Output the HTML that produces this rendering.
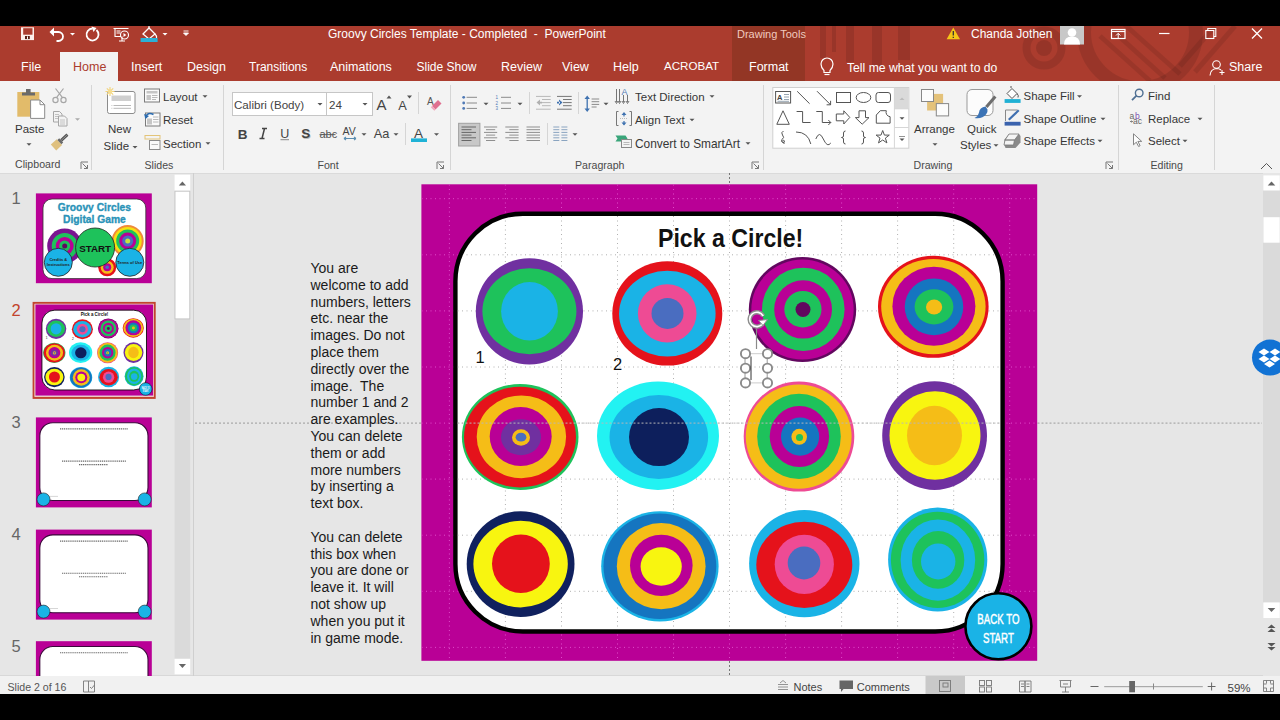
<!DOCTYPE html>
<html><head><meta charset="utf-8">
<style>
*{margin:0;padding:0;box-sizing:border-box}
html,body{width:1280px;height:720px;overflow:hidden;background:#000}
body{position:relative;font-family:"Liberation Sans",sans-serif;color:#444}
.a{position:absolute}
.t{position:absolute;white-space:nowrap;line-height:1}
svg{position:absolute;overflow:visible}
#top{left:0;top:26px;width:1280px;height:55px;background:#ab3c2e}
#ribbon{left:0;top:81px;width:1280px;height:93px;background:#f3f3f3;border-bottom:1px solid #dadada}
#work{left:0;top:174px;width:1280px;height:502px;background:#e6e6e6}
#status{left:0;top:675px;width:1280px;height:19px;background:#f1f1f1;border-top:1px solid #d8d8d8}
.tab{position:absolute;top:60px;font-size:12.5px;color:#fff;white-space:nowrap;line-height:14px}
.rl{position:absolute;font-size:12px;color:#444;white-space:nowrap;line-height:14px}
.gl{position:absolute;top:159px;font-size:11px;color:#555;white-space:nowrap;line-height:13px}
.sep{position:absolute;top:86px;width:1px;height:84px;background:#d6d6d6}
.dd{position:absolute;width:0;height:0;border-left:3px solid transparent;border-right:3px solid transparent;border-top:3px solid #555}
</style></head>
<body>
<!-- TITLE + TABS -->
<div id="top" class="a">
  <svg width="1280" height="55" style="left:0;top:0">
    <g fill="#000" fill-opacity="0.10">
      <rect x="820" y="0" width="6" height="32"/><rect x="832" y="0" width="4" height="26"/><rect x="846" y="0" width="8" height="36"/>
      <rect x="872" y="0" width="10" height="40"/><rect x="898" y="0" width="12" height="34"/>
    </g>
    <circle cx="1044" cy="22" r="17.5" fill="none" stroke="#000" stroke-opacity="0.10" stroke-width="8"/>
    <circle cx="1044" cy="22" r="8" fill="#000" fill-opacity="0.12"/>
    <circle cx="1140" cy="6" r="56" fill="none" stroke="#000" stroke-opacity="0.10" stroke-width="14"/>
    <g stroke="#000" stroke-opacity="0.09" stroke-width="5">
      <line x1="1100" y1="10" x2="1150" y2="55"/><line x1="1112" y1="4" x2="1165" y2="52"/>
      <line x1="1124" y1="-2" x2="1180" y2="48"/><line x1="1215" y1="0" x2="1180" y2="40"/>
      <line x1="1235" y1="0" x2="1195" y2="46"/>
    </g>
  </svg>
</div>
<!-- contextual tab -->
<div class="a" style="left:732px;top:26px;width:73px;height:55px;background:#933625"></div>
<div class="t" style="left:737px;top:28px;font-size:11px;color:#f2c9bf;line-height:12px">Drawing Tools</div>
<!-- Home tab -->
<div class="a" style="left:60px;top:52px;width:58px;height:29px;background:#f3f3f3"></div>
<div class="tab" style="left:21px">File</div>
<div class="tab" style="left:73px;color:#ab3c2e">Home</div>
<div class="tab" style="left:131px">Insert</div>
<div class="tab" style="left:187px">Design</div>
<div class="tab" style="left:249px;font-size:12px">Transitions</div>
<div class="tab" style="left:330px">Animations</div>
<div class="tab" style="left:416.5px;font-size:12px">Slide Show</div>
<div class="tab" style="left:501px">Review</div>
<div class="tab" style="left:562px">View</div>
<div class="tab" style="left:613px">Help</div>
<div class="tab" style="left:664px;font-size:11.6px;top:59.2px">ACROBAT</div>
<div class="tab" style="left:749px">Format</div>
<div class="tab" style="left:847px;font-size:12.2px;top:60.5px">Tell me what you want to do</div>
<div class="tab" style="left:1229px">Share</div>
<div class="t" style="left:328px;top:27px;font-size:12px;color:#fff;line-height:14px">Groovy Circles Template - Completed &nbsp;- &nbsp;PowerPoint</div>
<div class="t" style="left:971px;top:27px;font-size:12px;color:#fff;line-height:14px">Chanda Jothen</div>


<svg width="1280" height="720" style="left:0;top:0" font-family="Liberation Sans">
 <!-- QAT -->
 <rect x="21" y="27.3" width="13" height="12.8" fill="#fdf0ec"/>
 <rect x="23.2" y="28.2" width="9.3" height="6.5" fill="#ab3c2e"/>
 <rect x="25" y="36" width="4.8" height="3.1" fill="#5a1e14"/><rect x="27" y="36.4" width="1" height="2.5" fill="#fff"/>
 <path d="M52 32 h6.5 a4.5 4.5 0 0 1 0 9 h-2" fill="none" stroke="#fff" stroke-width="1.8"/>
 <path d="M49.5 32 l4.5-4.5 v9z" fill="#fff"/>
 <path d="M70 33 h5 l-2.5 2.5z" fill="#fff"/>
 <path d="M96.5 30 a6 6 0 1 1 -4 -1.5" fill="none" stroke="#fff" stroke-width="1.8"/>
 <path d="M91.5 26.5 l5 1.5 l-3 4z" fill="#fff"/>
 <g fill="none" stroke="#fff" stroke-width="1.1">
  <path d="M113.5 28.5 h15 M115 28.5 v8 h6 M119 41 h6 M122 36.5 v4.5"/>
  <circle cx="124.5" cy="35" r="4"/>
  <path d="M116.5 31 h4 M116.5 33 h4"/>
 </g>
 <path d="M123.5 33 l2.8 2 l-2.8 2z" fill="#fff"/>
 <path d="M143 34 l6-6 l6 6 l-6 5z" fill="none" stroke="#fff" stroke-width="1.3"/>
 <path d="M149 28 v-2" stroke="#fff" stroke-width="1.2"/>
 <path d="M155 34 q2 2 1.5 4" stroke="#fff" stroke-width="1.2" fill="none"/>
 <rect x="140.6" y="38" width="17" height="4" fill="#2bb0d6"/>
 <path d="M162.5 33 h5 l-2.5 2.5z" fill="#fff"/>
 <path d="M183.5 31 h5 M183.5 33 h5 l-2.5 2.5z" stroke="#fff" stroke-width="0.9" fill="#fff"/>
 <!-- right side -->
 <path d="M953.3 27.5 l6.7 11.7 h-13.4z" fill="#f5c518"/>
 <path d="M953.3 31 v4.5 M953.3 36.8 v1.2" stroke="#333" stroke-width="1.3"/>
 <rect x="1060" y="26" width="24" height="18.5" fill="#c8c8c8"/>
 <circle cx="1072" cy="32.5" r="4.3" fill="#fff"/>
 <path d="M1064 44.5 q0-8 8-8 q8 0 8 8z" fill="#fff"/>
 <rect x="1111.5" y="29.5" width="13.5" height="9" fill="none" stroke="#fff" stroke-width="1.2"/>
 <path d="M1111.5 31.5 h13.5" stroke="#fff" stroke-width="1.2"/>
 <path d="M1118.2 33.5 v4.5 M1116 35.5 l2.2-2.2 l2.2 2.2" stroke="#fff" stroke-width="1" fill="none"/>
 <path d="M1159 33.5 h10.5" stroke="#fff" stroke-width="1.2"/>
 <rect x="1205.8" y="30.5" width="8" height="8" fill="none" stroke="#fff" stroke-width="1.1"/>
 <path d="M1207.8 30.5 v-2 h8 v8 h-2" fill="none" stroke="#fff" stroke-width="1.1"/>
 <path d="M1252 28.5 l10 10 M1262 28.5 l-10 10" stroke="#fff" stroke-width="1.3"/>
 <!-- lightbulb -->
 <path d="M824 70.5 q-3-3 -3-6.5 a6 6 0 0 1 12 0 q0 3.5 -3 6.5 v2 h-6z" fill="none" stroke="#fff" stroke-width="1.2"/>
 <path d="M824.5 74.5 h5" stroke="#fff" stroke-width="1.2"/>
 <!-- share -->
 <circle cx="1216.5" cy="64.5" r="3.8" fill="none" stroke="#fff" stroke-width="1.1"/>
 <path d="M1210 75.5 q0.5-6.5 6.5-7 q3 0 4.5 1.5 M1219.5 72.5 h5 M1222 70 v5" fill="none" stroke="#fff" stroke-width="1.1"/>
</svg>

<!-- RIBBON -->
<div id="ribbon" class="a"></div>
<svg width="1280" height="720" style="left:0;top:0" font-family="Liberation Sans">
 <g fill="#d5d5d5">
  <rect x="91" y="85" width="1" height="85"/><rect x="223" y="85" width="1" height="85"/>
  <rect x="450" y="85" width="1" height="85"/><rect x="763" y="85" width="1" height="85"/>
  <rect x="1118" y="85" width="1" height="85"/><rect x="1214" y="85" width="1" height="85"/>
  <rect x="418" y="92" width="1" height="22"/><rect x="405" y="123" width="1" height="22"/>
  <rect x="529" y="92" width="1" height="22"/><rect x="578" y="92" width="1" height="22"/>
  <rect x="547" y="123" width="1" height="22"/>
 </g>
 <g font-size="10.6" fill="#4a4a4a">
  <text x="15" y="168">Clipboard</text>
  <text x="144.5" y="168.5">Slides</text>
  <text x="317.5" y="168.5">Font</text>
  <text x="575" y="168.5">Paragraph</text>
  <text x="913.5" y="168.5">Drawing</text>
  <text x="1150.5" y="168.5">Editing</text>
 </g>
 <!-- launchers -->
 <g fill="none" stroke="#777" stroke-width="1">
  <path d="M81 169 V162 H88 M82.5 163.5 L87.5 168.5 M84 168.5 H87.5 V165"/>
  <path d="M437 169 V162 H444 M438.5 163.5 L443.5 168.5 M440 168.5 H443.5 V165"/>
  <path d="M752 169 V162 H759 M753.5 163.5 L758.5 168.5 M755 168.5 H758.5 V165"/>
  <path d="M1106 169 V162 H1113 M1107.5 163.5 L1112.5 168.5 M1109 168.5 H1112.5 V165"/>
  <path d="M1261 169 L1266.5 163.5 L1272 169" stroke="#555"/>
 </g>
 <g font-size="11.5" fill="#363636">
  <text x="15" y="133.4">Paste</text>
  <text x="108" y="133.4">New</text>
  <text x="103.5" y="149.5">Slide</text>
  <text x="163" y="101.2">Layout</text>
  <text x="163" y="124">Reset</text>
  <text x="163" y="147.9">Section</text>
  <text x="914" y="133.4">Arrange</text>
  <text x="967" y="133.4">Quick</text>
  <text x="960" y="149.4">Styles</text>
  <text x="635" y="100.5">Text Direction</text>
  <text x="635" y="123.8">Align Text</text>
  <text x="635" y="147.5" font-size="11.9">Convert to SmartArt</text>
  <text x="1023.5" y="99.9">Shape Fill</text>
  <text x="1023.5" y="123">Shape Outline</text>
  <text x="1023.5" y="145.2">Shape Effects</text>
  <text x="1148" y="99.9">Find</text>
  <text x="1148" y="123">Replace</text>
  <text x="1148" y="145.2">Select</text>
 </g>
 <!-- dropdown arrows -->
 <g fill="#555">
  <path d="M26.5 143.3 h5 l-2.5 2.5z"/><path d="M75 118.3 h5 l-2.5 2.5z" fill="#aaa"/>
  <path d="M132.5 146 h5 l-2.5 2.5z"/>
  <path d="M202.5 95.3 h5 l-2.5 2.5z"/><path d="M205.5 142.3 h5 l-2.5 2.5z"/>
  <path d="M317.5 103.3 h5 l-2.5 2.5z"/><path d="M362.5 103.3 h5 l-2.5 2.5z"/>
  <path d="M361.5 133.3 h5 l-2.5 2.5z"/><path d="M393.5 133.3 h5 l-2.5 2.5z"/><path d="M434 133.3 h5 l-2.5 2.5z"/>
  <path d="M483.5 102.8 h5 l-2.5 2.5z"/><path d="M517.5 102.8 h5 l-2.5 2.5z"/><path d="M603.5 102.8 h5 l-2.5 2.5z"/>
  <path d="M572.5 133.3 h5 l-2.5 2.5z"/>
  <path d="M709.5 95.3 h5 l-2.5 2.5z"/><path d="M689.5 118.8 h5 l-2.5 2.5z"/><path d="M745.5 142.3 h5 l-2.5 2.5z"/>
  <path d="M932.5 143.3 h5 l-2.5 2.5z"/><path d="M993.5 144.3 h5 l-2.5 2.5z"/>
  <path d="M1077 95.3 h5 l-2.5 2.5z"/><path d="M1100.5 117.8 h5 l-2.5 2.5z"/><path d="M1097.5 139.8 h5 l-2.5 2.5z"/>
  <path d="M1197.5 117.8 h5 l-2.5 2.5z"/><path d="M1182.5 139.8 h5 l-2.5 2.5z"/>
 </g>
</svg>


<svg width="1280" height="720" style="left:0;top:0" font-family="Liberation Sans">
 <!-- Paste -->
 <rect x="17.3" y="92" width="22" height="24.7" fill="#e2bb6a"/>
 <path d="M22 92.5 h13 v3 h-13z M26 89 h4.6 v3.5 h-4.6z" fill="#6a6a6a"/>
 <path d="M30.6 100 h9.4 l4.7 4.7 v13.7 h-14.1z" fill="#fff" stroke="#8a8a8a" stroke-width="1"/>
 <path d="M40 100 v4.7 h4.7" fill="none" stroke="#8a8a8a" stroke-width="1"/>
 <!-- scissors -->
 <g fill="none" stroke="#a6a6a6" stroke-width="1.2">
  <circle cx="55.5" cy="100" r="2.6"/><circle cx="63.5" cy="100" r="2.6"/>
  <path d="M56.5 97.7 L63.5 88.5 M62.5 97.7 L55.5 88.5"/>
 </g>
 <!-- copy -->
 <g fill="#f3f3f3" stroke="#a6a6a6" stroke-width="1">
  <path d="M53.5 111.5 h6 l2.5 2.5 v8 h-8.5z"/><path d="M58.5 116 h6 l2.5 2.5 v7.5 h-8.5z"/>
 </g>
 <g stroke="#b5b5b5" stroke-width="0.8"><path d="M60 120 h5 M60 122 h5 M60 124 h5 M55 114.5 h4 M55 116.5 h3 M55 118.5 h3"/></g>
 <!-- format painter -->
 <path d="M56.2 150.4 L50.8 144.6 L56.7 139.2 L62.1 145z" fill="#dfc07e"/>
 <path d="M57.4 139.9 L61.4 144.3 L63.2 142.6 L59.2 138.2z" fill="#6b6b6b"/>
 <path d="M60.2 141.5 L62.2 139.3 L68.4 133.5 L66.4 135.7 z M60.2 139.3 L62.2 141.5 L68.4 135.7 L66.4 133.5z" fill="#555"/>
 <!-- New slide -->
 <rect x="107.5" y="91.5" width="27.5" height="22" rx="2" fill="#fff" stroke="#8c8c8c" stroke-width="1"/>
 <rect x="111.5" y="95.5" width="19.5" height="5.5" fill="#cfcfcf"/>
 <path d="M113.5 105.5 h17.5 M113.5 108.3 h17.5" stroke="#b0b0b0" stroke-width="0.9"/>
 <path d="M111.5 105.5 h0.8 M111.5 108.3 h0.8" stroke="#b0b0b0" stroke-width="0.9"/>
 <g stroke="#f1d27a" stroke-width="1.1"><path d="M110 87 v9 M105.5 91.5 h9 M106.8 88.3 l6.4 6.4 M113.2 88.3 l-6.4 6.4"/></g>
 <circle cx="110" cy="91.5" r="2.2" fill="#f5dd8f"/>
 <!-- Layout -->
 <rect x="144.5" y="89" width="15" height="13" fill="#fafafa" stroke="#7b7b7b" stroke-width="1"/>
 <rect x="146.5" y="91" width="11" height="2.5" fill="#c6c6c6"/><rect x="146.5" y="95" width="4.5" height="5" fill="#c6c6c6"/>
 <path d="M152 95.5 h5.5 M152 97.5 h5.5 M152 99.5 h4" stroke="#a8a8a8" stroke-width="0.8"/>
 <!-- Reset -->
 <rect x="145.5" y="113" width="14.5" height="13" fill="#fafafa" stroke="#7b7b7b" stroke-width="1"/>
 <rect x="147" y="118.5" width="5" height="6" fill="#c6c6c6"/>
 <path d="M153 117 h5.5 M153 119.5 h5.5 M153 122 h5.5" stroke="#a8a8a8" stroke-width="0.8"/>
 <path d="M145.5 117.5 q2-6 8-3" fill="none" stroke="#2b6cb0" stroke-width="1.6"/><path d="M144 114 l1.5 5 l3.5-3z" fill="#2b6cb0"/>
 <!-- Section -->
 <rect x="145" y="135.5" width="15" height="3.5" fill="none" stroke="#e3c478" stroke-width="1"/>
 <rect x="149.5" y="140.5" width="10.5" height="9" fill="#fafafa" stroke="#8b8b8b" stroke-width="1"/>
 <path d="M151.5 144.5 h6.5" stroke="#aaa" stroke-width="0.8"/>
 <!-- Font boxes -->
 <rect x="232.5" y="92.5" width="94" height="23" fill="#fff" stroke="#c6c6c6" stroke-width="1"/>
 <rect x="326.5" y="92.5" width="46" height="23" fill="#fff" stroke="#c6c6c6" stroke-width="1"/>
 <text x="234" y="108.5" font-size="11.6" fill="#444">Calibri (Body)</text>
 <text x="329" y="108.5" font-size="11.6" fill="#444">24</text>
 <path d="M317.5 103 h5 l-2.5 2.5z M362.5 103 h5 l-2.5 2.5z" fill="#555"/>
 <text x="376.5" y="109.6" font-size="15" fill="#444">A</text>
 <text x="398.3" y="109.6" font-size="12.8" fill="#444">A</text>
 <path d="M386.5 98.5 l2.5-3 l2.5 3z" fill="#555"/><path d="M407 95.5 h5 l-2.5 3z" fill="#555"/>
 <text x="427" y="105" font-size="10" fill="#555">A</text>
 <path d="M432 106 l6-6 l3.5 3.5 l-6 6z" fill="#e07090"/><path d="M432 106 l3.5 3.5 l-1.2 1.2 l-3.5-3.5z" fill="#f2a8bd"/>
 <text x="237.8" y="138.5" font-size="13.5" font-weight="bold" fill="#444">B</text>
 <path d="M262 128.5 h5 M259.5 138.5 h5 M264.5 128.5 l-2.5 10" stroke="#444" stroke-width="1.5" fill="none"/>
 <text x="280.3" y="137.5" font-size="12.5" fill="#444">U</text><rect x="280.5" y="139.2" width="8.5" height="1" fill="#888"/>
 <text x="302" y="138.5" font-size="13.5" font-weight="bold" fill="#bbb">S</text><text x="301.3" y="137.8" font-size="13.5" font-weight="bold" fill="#444">S</text>
 <text x="319.5" y="138" font-size="11" fill="#555">abc</text><rect x="319.5" y="134.2" width="16" height="0.9" fill="#555"/>
 <text x="342.5" y="135.2" font-size="10.5" fill="#444">AV</text>
 <path d="M344 138.5 h12 M344 138.5 l2-1.5 M344 138.5 l2 1.5 M356 138.5 l-2-1.5 M356 138.5 l-2 1.5" stroke="#5a8db0" stroke-width="1.1" fill="none"/>
 <text x="373.8" y="138.4" font-size="12.8" fill="#444">Aa</text>
 <text x="414" y="138" font-size="13.5" fill="#444">A</text>
 <rect x="411" y="138.4" width="16" height="3.6" fill="#1fb2d6"/>
</svg>


<svg width="1280" height="720" style="left:0;top:0" font-family="Liberation Sans">
 <!-- bullets -->
 <g fill="#4f79b5"><circle cx="463.7" cy="97.3" r="1.4"/><circle cx="463.7" cy="103" r="1.4"/><circle cx="463.7" cy="108.4" r="1.4"/></g>
 <path d="M466.6 97.3 h10.4 M466.6 103 h10.4 M466.6 108.4 h10.4" stroke="#8a8a8a" stroke-width="1"/>
 <g fill="#4f79b5" font-size="4.5"><text x="495.5" y="99">1</text><text x="495.5" y="104.5">2</text><text x="495.5" y="110">3</text></g>
 <path d="M501 97.3 h10 M501 103 h10 M501 108.4 h10" stroke="#8a8a8a" stroke-width="1"/>
 <!-- indent -->
 <path d="M536 96.4 h14.7 M542 99.5 h8.7 M542 102.6 h8.7 M542 105.7 h8.7 M536 109.2 h14.7" stroke="#b8b8b8" stroke-width="1"/>
 <path d="M536.5 102.6 l3.5-3 v6z M539 101.8 h3 v1.6 h-3z" fill="#b0b0b0"/>
 <path d="M557 96.4 h14.7 M563 99.5 h8.7 M563 102.6 h8.7 M563 105.7 h8.7 M557 109.2 h14.7" stroke="#777" stroke-width="1"/>
 <path d="M562.5 102.6 l-3.5-3 v6z M557 101.8 h3 v1.6 h-3z" fill="#3f72b0"/>
 <!-- line spacing -->
 <path d="M587.2 97 v13" stroke="#3f72b0" stroke-width="1.3"/><path d="M584.5 99 l2.7-3.5 l2.7 3.5z M584.5 108.5 l2.7 3.5 l2.7-3.5z" fill="#3f72b0"/>
 <path d="M591.6 99 h7.6 M591.6 101.7 h7.6 M591.6 104.4 h7.6 M591.6 107 h5" stroke="#8a8a8a" stroke-width="1"/>
 <!-- align -->
 <rect x="458.6" y="123.3" width="21.3" height="22.7" fill="#c8c8c8" stroke="#a0a0a0" stroke-width="1"/>
 <path d="M461.5 127 h14.5 M461.5 129.7 h10 M461.5 132.4 h14.5 M461.5 135.1 h10 M461.5 137.8 h14.5 M461.5 140.5 h10" stroke="#666" stroke-width="1"/>
 <path d="M484 127 h13.2 M486 129.7 h9.2 M484 132.4 h13.2 M486 135.1 h9.2 M484 137.8 h13.2 M486 140.5 h9.2" stroke="#8f8f8f" stroke-width="1"/>
 <path d="M505.3 127 h13.3 M509.3 129.7 h9.3 M505.3 132.4 h13.3 M509.3 135.1 h9.3 M505.3 137.8 h13.3 M509.3 140.5 h9.3" stroke="#8f8f8f" stroke-width="1"/>
 <path d="M526.5 127 h13.5 M526.5 129.7 h13.5 M526.5 132.4 h13.5 M526.5 135.1 h13.5 M526.5 137.8 h13.5 M526.5 140.5 h13.5" stroke="#8f8f8f" stroke-width="1"/>
 <path d="M553.3 127 h6 M553.3 129.7 h6 M553.3 132.4 h6 M553.3 135.1 h6 M553.3 137.8 h6 M553.3 140.5 h6 M561.4 127 h6 M561.4 129.7 h6 M561.4 132.4 h6 M561.4 135.1 h6 M561.4 137.8 h6 M561.4 140.5 h6" stroke="#8aa4c0" stroke-width="1"/>
 <!-- text direction -->
 <path d="M616.5 89 v13 M619.5 89 v13 M623.5 95 v7 M627.5 95 v7" stroke="#666" stroke-width="0.9"/>
 <path d="M615 101 l1.5 2.5 l1.5-2.5 M618 101 l1.5 2.5 l1.5-2.5 M622 101 l1.5 2.5 l1.5-2.5 M626 101 l1.5 2.5 l1.5-2.5" stroke="#666" stroke-width="0.9" fill="none"/>
 <text x="621.5" y="95" font-size="9" fill="#4f79b5">A</text>
 <!-- align text -->
 <path d="M618.5 111.5 h-2 v14 h2 M629.5 111.5 h2 v14 h-2" fill="none" stroke="#777" stroke-width="1"/>
 <path d="M620 118.5 h8" stroke="#aaa" stroke-width="0.8" stroke-dasharray="1 1"/>
 <path d="M624 113 v3.5 M624 121 v3.5" stroke="#3f72b0" stroke-width="1.2"/><path d="M621.5 115 l2.5-3 l2.5 3z M621.5 122.5 l2.5 3 l2.5-3z" fill="#3f72b0"/>
 <!-- smartart -->
 <path d="M615.5 135.5 h10 l2 3 l-2 3 h-10 l2-3z" fill="#3aa57a"/>
 <rect x="621.5" y="139.5" width="10" height="8" fill="#f3f3f3" stroke="#888" stroke-width="1"/>
 <path d="M623.5 142.5 h6 M623.5 144.5 h6" stroke="#aaa" stroke-width="0.8"/>
 <!-- gallery -->
 <rect x="772.8" y="87.5" width="136" height="60.7" fill="#fff" stroke="#d0d0d0" stroke-width="1"/>
 <rect x="894.4" y="88" width="14" height="20.8" fill="#dadada"/>
 <path d="M894.4 87.5 v60.7 M894.4 108.8 h14.4 M894.4 127.5 h14.4" stroke="#d6d6d6" stroke-width="1"/>
 <path d="M899.5 100 l2.5-2.5 l2.5 2.5z" fill="#bcbcbc"/>
 <path d="M899.5 117.3 h5 l-2.5 2.5z" fill="#555"/>
 <path d="M899 136.5 h6" stroke="#777" stroke-width="0.8"/><path d="M899.5 138.5 h5 l-2.5 2.5z" fill="#555"/>
 <g fill="none" stroke="#555" stroke-width="1">
  <rect x="775.6" y="91.5" width="15" height="11.5" fill="#fff"/>
  <path d="M784 94.5 h5 M784 97 h5 M784 99.5 h5 M777.5 101.3 h11.5" stroke="#8a9aa8" stroke-width="0.9"/>
  <path d="M797.2 91.3 L809.6 103.7"/>
  <path d="M817 91.2 L830.6 104.8 M830.6 104.8 h-4 M830.6 104.8 v-4"/>
  <rect x="836.5" y="92.5" width="14" height="10"/>
  <ellipse cx="863.5" cy="97.5" rx="7.3" ry="5"/>
  <rect x="876" y="92.5" width="14.5" height="10" rx="2.5"/>
  <path d="M783 110.8 L776.8 124.3 H789.3z"/>
  <path d="M796.6 111.5 h6 v11 h8"/>
  <path d="M816.3 111.5 h6 v11 h8.5 M830.8 122.5 l-2.5-2.5 M830.8 122.5 l-2.5 2.5"/>
  <path d="M836.3 114 h7.5 v-3.2 l6 6.6 l-6 6.6 v-3.2 h-7.5z"/>
  <path d="M859 110.8 h6.5 v6.8 h3.5 l-6.8 6.6 l-6.8-6.6 h3.6z"/>
  <path d="M876.3 115 l4-4.3 h6 a4.5 4.5 0 0 0 3.8 6 v6.5 h-13.8z"/>
  <path d="M783.5 131 q-3 1.5 -1 4 q2.5 2.5 -0.5 4.5 q-1.5 2 1 3 q2 0.5 1.3 -1.8 q-0.8 -1.5 -2.3 0.8 l2.5 2.5"/>
  <path d="M796 132 q12 0 14.8 12"/>
  <path d="M815.8 139 q3.5-9 7.5 0 q4 9 7.5 4"/>
  <path d="M845.5 131 q-2 0-2 2 v3 q0 1.5-2 1.5 q2 0 2 1.5 v3 q0 2 2 2"/>
  <path d="M861.5 131 q2 0 2 2 v3 q0 1.5 2 1.5 q-2 0-2 1.5 v3 q0 2-2 2"/>
  <path d="M882.7 130.5 l1.7 4.6 h4.9 l-3.9 3 l1.5 4.8 l-4.2-2.9 l-4.2 2.9 l1.5-4.8 l-3.9-3 h4.9z"/>
 </g>
 <text x="777" y="99.5" font-size="7.5" font-weight="bold" fill="#444">A</text>
 <!-- Arrange -->
 <rect x="927.1" y="93.9" width="16" height="16.6" fill="#e4c27a"/>
 <rect x="921.5" y="89.5" width="12" height="12" fill="#fcfcfc" stroke="#888" stroke-width="1"/>
 <rect x="936.3" y="103.6" width="12.3" height="12.3" fill="#fcfcfc" stroke="#888" stroke-width="1"/>
 <!-- Quick styles -->
 <rect x="967" y="89.5" width="26" height="26" rx="5" fill="#fcfcfc" stroke="#999" stroke-width="1"/>
 <path d="M996.5 97.5 l-9 10.5 l-2.3-2 l9-10.5z" fill="#6d6d6d"/>
 <path d="M985.5 106.5 q-6 1 -6.5 6 q-1 4 -4.5 5.5 q8 1 11.5-3.5 q2-2.5 1.5-5z" fill="#3b73b5"/>
 <!-- shape fill -->
 <path d="M1007 93.5 l5-5 l5 5 l-5 5z" fill="#fff" stroke="#555" stroke-width="1"/>
 <path d="M1011 88 v-2 M1017 93.5 q2 2 1 4" stroke="#555" fill="none" stroke-width="1"/>
 <rect x="1004.6" y="99.1" width="16" height="3.8" fill="#1fb0d4"/>
 <!-- shape outline -->
 <path d="M1005.5 121 v-11 h12" fill="none" stroke="#888" stroke-width="1"/>
 <path d="M1008 119 l10-9.5 l1.5 1.5 l-10 9.5z" fill="#3f6fb0"/>
 <rect x="1004.6" y="121.8" width="16" height="3.8" fill="#3a62ad"/>
 <!-- shape effects -->
 <path d="M1009 134 h10 l1.5 2 v6.5 l-5 5.5 h-10 l-1 -2.5 v-6z" fill="#8a8a8a"/>
 <path d="M1009 134 h10 l-4.5 6 v0 h-9.5z M1005 140 h9.5 l-1 5 h-9.5z" fill="#f4f4f4" stroke="#777" stroke-width="0.8"/>
 <!-- find -->
 <circle cx="1139.2" cy="93" r="3.8" fill="none" stroke="#4f6f92" stroke-width="1.4"/>
 <path d="M1136.5 95.7 L1132 100.2" stroke="#4f6f92" stroke-width="1.8"/>
 <!-- replace -->
 <text x="1129.5" y="118.5" font-size="8.5" fill="#666">a</text><text x="1135" y="118.5" font-size="8.5" fill="#7b4fb0">b</text>
 <text x="1133" y="124.3" font-size="8.5" fill="#666">ac</text>
 <path d="M1130 121.5 h2.5 l-1 -1 M1132.5 121.5 l-1 1" stroke="#666" stroke-width="0.8" fill="none"/>
 <!-- select -->
 <path d="M1133.5 133.8 v11 l2.8-2.6 l2.3 4.3 l1.5-0.8 l-2.2-4.3 h3.8z" fill="#fdfdfd" stroke="#777" stroke-width="0.9"/>
</svg>


<!-- WORKSPACE -->
<div id="work" class="a"></div>
<div id="status" class="a"></div>
<svg width="1280" height="720" style="left:0;top:0" font-family="Liberation Sans">
 <defs>
  <clipPath id="rrclip"><rect x="457.5" y="216" width="543" height="413.5" rx="65" ry="65"/></clipPath>
  <clipPath id="slclip"><rect x="421.4" y="184.3" width="615.8" height="476.5"/></clipPath>
 </defs>
 <!-- left pane -->
 <rect x="193" y="173" width="1" height="503" fill="#cfcfcf"/>
 <rect x="174.6" y="190.8" width="15.6" height="468" fill="#dadada"/>
 <rect x="174.6" y="174.7" width="15.6" height="16" fill="#fff"/>
 <path d="M178.8 185.5 l3.6-4 l3.6 4z" fill="#666"/>
 <rect x="175" y="191.2" width="14.8" height="127.7" fill="#fff" stroke="#c4c4c4" stroke-width="0.9"/>
 <rect x="174.6" y="658.8" width="15.6" height="15.5" fill="#fff"/>
 <path d="M178.8 664 h7.2 l-3.6 4z" fill="#666"/>
 <!-- right scrollbar -->
 <rect x="1263" y="173" width="17" height="503" fill="#e6e6e6"/>
 <rect x="1263" y="190.5" width="17" height="412" fill="#dadada"/>
 <rect x="1263.4" y="175.4" width="16.3" height="15" fill="#fff"/>
 <path d="M1267.7 185.5 l3.8-4 l3.8 4z" fill="#666"/>
 <rect x="1263.4" y="217.2" width="16.3" height="25.5" fill="#fff"/>
 <rect x="1263.4" y="602.5" width="16.3" height="15.5" fill="#fff"/>
 <path d="M1267.7 608 h7.6 l-3.8 4z" fill="#666"/>
 <path d="M1267.5 628 l4-3.5 l4 3.5z M1267.5 632 l4-3.5 l4 3.5z M1267.5 643 l4 3.5 l4-3.5z M1267.5 647 l4 3.5 l4-3.5z" fill="#555"/>
 <!-- guides outside slide -->
 <path d="M195 423.1 H421 M1037.5 423.1 H1262" stroke="#9a9a9a" stroke-width="1" stroke-dasharray="2 2"/>
 <path d="M729.5 173 V184 M729.5 661 V676" stroke="#777" stroke-width="1" stroke-dasharray="2 2"/>
 <!-- SLIDE -->
 <g id="slbg">
  <rect x="421.4" y="184.3" width="615.8" height="476.5" fill="#b90096"/>
 </g>
 <g clip-path="url(#slclip)"><path d="M449.4 184.5 V660.5 M505.4 184.5 V660.5 M561.5 184.5 V660.5 M617.5 184.5 V660.5 M673.5 184.5 V660.5 M729.5 184.5 V660.5 M785.6 184.5 V660.5 M841.6 184.5 V660.5 M897.6 184.5 V660.5 M953.7 184.5 V660.5 M1009.7 184.5 V660.5 M421.5 198.7 H1037 M421.5 254.8 H1037 M421.5 310.9 H1037 M421.5 367.0 H1037 M421.5 423.1 H1037 M421.5 479.1 H1037 M421.5 535.2 H1037 M421.5 591.3 H1037 M421.5 647.4 H1037 " stroke="#e04ccb" stroke-width="1" stroke-dasharray="1 3.5"/></g>
 <g id="slrr"><rect x="455.4" y="213.7" width="547.2" height="417.8" rx="67.5" ry="67.5" fill="#fff" stroke="#000" stroke-width="4.4"/></g>
 <g clip-path="url(#rrclip)"><path d="M449.4 184.5 V660.5 M505.4 184.5 V660.5 M561.5 184.5 V660.5 M617.5 184.5 V660.5 M673.5 184.5 V660.5 M729.5 184.5 V660.5 M785.6 184.5 V660.5 M841.6 184.5 V660.5 M897.6 184.5 V660.5 M953.7 184.5 V660.5 M1009.7 184.5 V660.5 M421.5 198.7 H1037 M421.5 254.8 H1037 M421.5 310.9 H1037 M421.5 367.0 H1037 M421.5 423.1 H1037 M421.5 479.1 H1037 M421.5 535.2 H1037 M421.5 591.3 H1037 M421.5 647.4 H1037 " stroke="#b0b0b0" stroke-width="1" stroke-dasharray="1 3.5"/></g>
 <g id="slcontent">
  <ellipse cx="529.4" cy="311.4" rx="53.6" ry="53.1" fill="#7030a0"/>
  <ellipse cx="529.4" cy="311.2" rx="47" ry="43" fill="#1ec25b"/>
  <ellipse cx="529.5" cy="311.3" rx="28.4" ry="29.3" fill="#1ab3e6"/>
  <ellipse cx="667.3" cy="313.4" rx="55" ry="52.2" fill="#e5121b"/>
  <ellipse cx="667.3" cy="313.7" rx="48.3" ry="42.9" fill="#1ab3e6"/>
  <ellipse cx="667.2" cy="313.4" rx="29.3" ry="29.1" fill="#ee4b94"/>
  <ellipse cx="667.5" cy="313.4" rx="16" ry="15.5" fill="#4a6dc0"/>
  <ellipse cx="802.5" cy="309.6" rx="53.7" ry="52.5" fill="#62075f"/>
  <ellipse cx="802.5" cy="309.6" rx="51.2" ry="50" fill="#b90096"/>
  <ellipse cx="803.3" cy="309.3" rx="41.3" ry="41.6" fill="#1ec25b"/>
  <ellipse cx="803.1" cy="309.4" rx="28.9" ry="29.2" fill="#b90096"/>
  <ellipse cx="802.9" cy="309.2" rx="18.6" ry="18.3" fill="#1ec25b"/>
  <ellipse cx="803" cy="309.5" rx="7.5" ry="7.5" fill="#62075f"/>
  <ellipse cx="933.3" cy="306.8" rx="55.3" ry="51" fill="#e5121b"/>
  <ellipse cx="933.4" cy="306.6" rx="52.2" ry="47.6" fill="#f5bd17"/>
  <ellipse cx="933.9" cy="306.2" rx="41.5" ry="39.5" fill="#b90096"/>
  <ellipse cx="934" cy="306.8" rx="29.3" ry="28.4" fill="#1575c0"/>
  <ellipse cx="934" cy="306.8" rx="19.4" ry="17.6" fill="#1ec25b"/>
  <ellipse cx="934.1" cy="307" rx="8.1" ry="7.5" fill="#f5bd17"/>
  <ellipse cx="520.2" cy="437" rx="58.3" ry="53" fill="#1ec25b"/>
  <ellipse cx="520" cy="437.1" rx="56" ry="50.3" fill="#e5121b"/>
  <ellipse cx="521.4" cy="436.8" rx="44.7" ry="41.4" fill="#f5bd17"/>
  <ellipse cx="520.7" cy="436.6" rx="31" ry="29.5" fill="#b90096"/>
  <ellipse cx="521" cy="437.2" rx="20" ry="18" fill="#7030a0"/>
  <ellipse cx="521" cy="437.5" rx="9" ry="8.3" fill="#f5bd17"/>
  <ellipse cx="521" cy="437.2" rx="5.4" ry="4.4" fill="#4a6dc0"/>
  <ellipse cx="658" cy="435.8" rx="61" ry="54.2" fill="#22f2f2"/>
  <ellipse cx="658.8" cy="437" rx="49.3" ry="42" fill="#1ab3e6"/>
  <ellipse cx="659" cy="437.1" rx="30" ry="29" fill="#0d1f5c"/>
  <ellipse cx="799" cy="436.6" rx="55.3" ry="55" fill="#ee4b94"/>
  <ellipse cx="798.7" cy="436.6" rx="52.9" ry="52.1" fill="#f5bd17"/>
  <ellipse cx="799" cy="436.4" rx="41.8" ry="42.7" fill="#1ec25b"/>
  <ellipse cx="799.4" cy="436.5" rx="29.7" ry="30.5" fill="#b90096"/>
  <ellipse cx="800.1" cy="436.6" rx="19.1" ry="19.1" fill="#1575c0"/>
  <ellipse cx="799.2" cy="436.8" rx="7.8" ry="8" fill="#f5bd17"/>
  <ellipse cx="799.5" cy="437.5" rx="3.5" ry="3.5" fill="#1ec25b"/>
  <ellipse cx="934.6" cy="435.6" rx="52.4" ry="54.4" fill="#7030a0"/>
  <ellipse cx="935" cy="435.5" rx="45.5" ry="44.2" fill="#f8f510"/>
  <ellipse cx="934.5" cy="435.5" rx="27.5" ry="29.8" fill="#f5bd17"/>
  <ellipse cx="520.6" cy="564.1" rx="53.9" ry="52.9" fill="#10215e"/>
  <ellipse cx="520.6" cy="564.1" rx="47.2" ry="43.3" fill="#f8f510"/>
  <ellipse cx="520.9" cy="563.8" rx="28.9" ry="29.2" fill="#e5121b"/>
  <ellipse cx="659.9" cy="566.3" rx="58.7" ry="55.1" fill="#1ab3e6"/>
  <ellipse cx="659.9" cy="566.2" rx="56.4" ry="52.7" fill="#1575c0"/>
  <ellipse cx="661.2" cy="566.2" rx="44.4" ry="43.1" fill="#f5bd17"/>
  <ellipse cx="661.3" cy="565.4" rx="31.3" ry="30.7" fill="#b90096"/>
  <ellipse cx="661.2" cy="566.5" rx="20.6" ry="19.3" fill="#f8f510"/>
  <ellipse cx="804.3" cy="563.6" rx="55.2" ry="53.7" fill="#1ab3e6"/>
  <ellipse cx="804.3" cy="564.8" rx="48" ry="43.1" fill="#e5121b"/>
  <ellipse cx="804.3" cy="564.3" rx="29.6" ry="29.6" fill="#ee4b94"/>
  <ellipse cx="804" cy="563" rx="16.3" ry="16.4" fill="#4a6dc0"/>
  <ellipse cx="937.7" cy="559.5" rx="49.6" ry="52" fill="#1ab3e6"/>
  <ellipse cx="937.6" cy="559.8" rx="46.7" ry="48.1" fill="#1ec25b"/>
  <ellipse cx="937.9" cy="560.1" rx="37.3" ry="40.6" fill="#1ab3e6"/>
  <ellipse cx="938.1" cy="559.9" rx="26.2" ry="28.9" fill="#1ec25b"/>
  <ellipse cx="938.2" cy="561.4" rx="17.2" ry="18" fill="#1ab3e6"/>
  <text x="658" y="246.6" font-size="25" font-weight="bold" fill="#111" transform="translate(658 0) scale(0.925 1) translate(-658 0)">Pick a Circle!</text>
  <text x="475.5" y="362.5" font-size="16.5" fill="#111">1</text>
  <text x="613" y="370" font-size="16.5" fill="#111">2</text>
  <circle cx="998.4" cy="626.3" r="33" fill="#1ab3e6" stroke="#000" stroke-width="2.6"/>
  <g transform="translate(998.4 0) scale(0.655 1) translate(-998.4 0)" fill="#fff" stroke="#fff" stroke-width="0.45" font-size="14.8" text-anchor="middle">
   <text x="998.4" y="624.3">BACK TO</text><text x="998.4" y="643.2">START</text>
  </g>
 </g>
 <path d="M421.5 423.1 H1037" stroke="#b8b8b8" stroke-width="1" stroke-dasharray="2 2" clip-path="url(#rrclip)"/>
 <!-- selection handles -->
 <path d="M756.5 328.5 V349" stroke="#8a8a8a" stroke-width="1.2"/>
 <path d="M749.5 353.7 H762.7 M749.5 382.9 H762.7" fill="none" stroke="#9a9a9a" stroke-dasharray="1 1" stroke-width="1"/>
 <path d="M745 358 V364 M745 372.5 V378.5 M767.2 358 V364 M767.2 372.5 V378.5" stroke="#9a9a9a" stroke-width="1"/>
 <g fill="#fff" stroke="#8a8a8a" stroke-width="1.9">
  <circle cx="745.5" cy="353.7" r="4.6"/><circle cx="767.5" cy="353.7" r="4.6"/>
  <circle cx="745.5" cy="368.2" r="4.6"/><circle cx="767.5" cy="368.2" r="4.6"/>
  <circle cx="745.5" cy="382.9" r="4.6"/><circle cx="767.5" cy="382.9" r="4.6"/>
 </g>
 <path d="M762.8 323.5 A7.2 7.2 0 1 1 763.2 316" fill="none" stroke="#8d8d8d" stroke-width="4.4"/>
 <path d="M762.8 323.5 A7.2 7.2 0 1 1 763.2 316" fill="none" stroke="#fff" stroke-width="1.6"/>
 <path d="M758.5 320.5 l9 -1 l-4.5 6z" fill="#fff" stroke="#8d8d8d" stroke-width="1"/>
 <path d="M751 356.5 V380" stroke="#333" stroke-width="1"/>
</svg>

<svg width="1280" height="720" style="left:0;top:0" font-family="Liberation Sans">
 <defs><clipPath id="paneclip"><rect x="0" y="173" width="174" height="503"/></clipPath></defs>
 <g font-size="16.5" fill="#666">
  <text x="11.5" y="203.5">1</text><text x="11.5" y="427.5">3</text><text x="11.5" y="539.5">4</text><text x="11.5" y="651.5">5</text>
 </g>
 <text x="11.5" y="315.5" font-size="16.5" fill="#c2432c">2</text>
 <!-- thumb 1 -->
 <rect x="35.9" y="193.4" width="115.9" height="89.8" fill="#b90096"/>
 <rect x="43" y="199" width="102.8" height="79.6" rx="9" fill="#fff" stroke="#333" stroke-width="0.8"/>
 <g font-size="10.5" font-weight="bold" fill="#2a93b8" stroke="#2a93b8" stroke-width="0.35" text-anchor="middle" transform="translate(94.4 0) scale(0.98 1) translate(-94.4 0)">
  <text x="94.4" y="211.5">Groovy Circles</text><text x="94.4" y="223">Digital Game</text>
 </g>
 <circle cx="64.7" cy="246" r="17.5" fill="#7a1490"/><circle cx="64.7" cy="246" r="13" fill="#1ec25b"/><circle cx="64.7" cy="246" r="9" fill="#b90096"/><circle cx="64.7" cy="246" r="5.5" fill="#1ec25b"/><circle cx="64.7" cy="246" r="2.5" fill="#62075f"/>
 <circle cx="127.7" cy="241" r="16" fill="#f08a3a"/><circle cx="127.7" cy="241" r="14" fill="#f5e010"/><circle cx="127.7" cy="241" r="11.5" fill="#1ec25b"/><circle cx="127.7" cy="241" r="8.5" fill="#b90096"/><circle cx="127.7" cy="241" r="5.5" fill="#4a6dc0"/><circle cx="127.7" cy="241" r="2.5" fill="#c8e040"/>
 <circle cx="107.2" cy="267.3" r="9" fill="#e5121b"/><circle cx="107.2" cy="267.3" r="6.5" fill="#f5bd17"/><circle cx="107.2" cy="267.3" r="4" fill="#b90096"/><circle cx="107.2" cy="267.3" r="1.8" fill="#4a6dc0"/>
 <circle cx="95.1" cy="247.5" r="19.5" fill="#1ec25b" stroke="#222" stroke-width="0.8"/>
 <text x="95.1" y="251.5" font-size="9.8" font-weight="bold" fill="#111" text-anchor="middle">START</text>
 <circle cx="58.3" cy="262.3" r="14" fill="#1ab3e6" stroke="#222" stroke-width="0.8"/>
 <circle cx="129.8" cy="262.3" r="14" fill="#1ab3e6" stroke="#222" stroke-width="0.8"/>
 <g font-size="4" font-weight="bold" fill="#222" text-anchor="middle"><text x="58.3" y="261">Credits &amp;</text><text x="58.3" y="266">Instructions</text><text x="129.8" y="264">Terms of Use</text></g>
 <!-- thumb 2 (selected) -->
 <rect x="33.6" y="302.9" width="121.1" height="95" fill="none" stroke="#c1442e" stroke-width="2"/>
 <rect x="35" y="304.2" width="118.4" height="92.3" fill="none" stroke="#f2c7bd" stroke-width="0.8"/>
 <g transform="translate(-45.1 269.3) scale(0.1911)">
  <use href="#slbg"/><use href="#slrr"/><use href="#slcontent"/>
 </g>
 <g clip-path="url(#paneclip)">
 
 <rect x="35.9" y="417.4" width="115.9" height="90" fill="#b90096"/>
 <rect x="39.8" y="422.7" width="108.2" height="77.8" rx="13" fill="#fff" stroke="#3a0a3a" stroke-width="1.1"/>
 <g stroke="#6a6a6a" stroke-width="1.1" stroke-dasharray="1.2 0.7"><path d="M60 428.9 h68 M62 461.1 h64 M79 464.6 h29"/></g>
 <circle cx="43.5" cy="499.4" r="6.5" fill="#1ab3e6" stroke="#222" stroke-width="0.6"/>
 <circle cx="144.7" cy="499.4" r="6.5" fill="#1ab3e6" stroke="#222" stroke-width="0.6"/>
 
 <rect x="50" y="495.9" width="8" height="0.8" fill="#ccc"/>

 
 <rect x="35.9" y="529.6" width="115.9" height="90" fill="#b90096"/>
 <rect x="39.8" y="534.9" width="108.2" height="77.8" rx="13" fill="#fff" stroke="#3a0a3a" stroke-width="1.1"/>
 <g stroke="#6a6a6a" stroke-width="1.1" stroke-dasharray="1.2 0.7"><path d="M60 541.1 h68 M62 573.3 h64 M79 576.8 h29"/></g>
 <circle cx="43.5" cy="611.6" r="6.5" fill="#1ab3e6" stroke="#222" stroke-width="0.6"/>
 <circle cx="144.7" cy="611.6" r="6.5" fill="#1ab3e6" stroke="#222" stroke-width="0.6"/>
 
 <rect x="50" y="608.1" width="8" height="0.8" fill="#ccc"/>

 
 <rect x="35.9" y="641.2" width="115.9" height="90" fill="#b90096"/>
 <rect x="39.8" y="646.5" width="108.2" height="77.8" rx="13" fill="#fff" stroke="#3a0a3a" stroke-width="1.1"/>
 <g stroke="#6a6a6a" stroke-width="1.1" stroke-dasharray="1.2 0.7"><path d="M60 652.7 h68 M62 684.9 h64 M79 688.4 h29"/></g>
 <circle cx="43.5" cy="723.2" r="6.5" fill="#1ab3e6" stroke="#222" stroke-width="0.6"/>
 <circle cx="144.7" cy="723.2" r="6.5" fill="#1ab3e6" stroke="#222" stroke-width="0.6"/>
 
 <rect x="50" y="719.7" width="8" height="0.8" fill="#ccc"/>

 </g>
 <g font-size="14" fill="#1a1a1a"><text x="310.5" y="273.0">You are</text><text x="310.5" y="289.8">welcome to add</text><text x="310.5" y="306.6">numbers, letters</text><text x="310.5" y="323.4">etc. near the</text><text x="310.5" y="340.2">images. Do not</text><text x="310.5" y="357.0">place them</text><text x="310.5" y="373.8">directly over the</text><text x="310.5" y="390.6">image.&#160; The</text><text x="310.5" y="407.4">number 1 and 2</text><text x="310.5" y="424.2">are examples.</text><text x="310.5" y="441.0">You can delete</text><text x="310.5" y="457.8">them or add</text><text x="310.5" y="474.6">more numbers</text><text x="310.5" y="491.4">by inserting a</text><text x="310.5" y="508.2">text box.</text><text x="310.5" y="541.8">You can delete</text><text x="310.5" y="558.6">this box when</text><text x="310.5" y="575.4">you are done or</text><text x="310.5" y="592.2">leave it. It will</text><text x="310.5" y="609.0">not show up</text><text x="310.5" y="625.8">when you put it</text><text x="310.5" y="642.6">in game mode.</text></g>
 <!-- dropbox badge -->
 <circle cx="1270" cy="357.6" r="18" fill="#1172d4"/>
 <g fill="#fff">
  <path d="M1258.5 352 l5.5-3.5 l5.5 3.5 l-5.5 3.5z M1269.5 352 l5.5-3.5 l5.5 3.5 l-5.5 3.5z M1258.5 359 l5.5-3.5 l5.5 3.5 l-5.5 3.5z M1269.5 359 l5.5-3.5 l5.5 3.5 l-5.5 3.5z M1264 364 l5.5-3.5 l5.5 3.5 l-5.5 3.5z"/>
 </g>
 <!-- status bar -->
 <text x="7.5" y="691" font-size="10.6" fill="#555">Slide 2 of 16</text>
 <g fill="none" stroke="#777" stroke-width="0.9">
  <path d="M83.5 681 h5 v11 h-5z M88.5 681 h6 v11 h-6"/>
  <path d="M90 687 l1.5 1.5 l3-3.5"/>
 </g>
 <g fill="none" stroke="#888" stroke-width="0.9"><path d="M778 684.5 h10 M778 687 h10 M778 689.5 h10 M780 683 l3-2.5 l3 2.5"/></g>
 <text x="793.5" y="691" font-size="11" fill="#444">Notes</text>
 <path d="M839.5 680.5 h13.5 v8.5 h-9.5 l-2.5 3 v-3 h-1.5z" fill="#666"/>
 <text x="856.7" y="691" font-size="11" fill="#444">Comments</text>
 <rect x="925.5" y="676" width="39.5" height="18" fill="#c9c9c9"/>
 <g fill="none" stroke="#777" stroke-width="0.9">
  <rect x="939.5" y="680.5" width="11" height="11"/><rect x="943" y="683" width="5" height="4"/>
  <rect x="979.5" y="680.5" width="5" height="5"/><rect x="986.5" y="680.5" width="5" height="5"/><rect x="979.5" y="687" width="5" height="5"/><rect x="986.5" y="687" width="5" height="5"/>
  <path d="M1019.5 681 h5.5 v11 h-5.5z M1025 681 h6 v11 h-6z M1021 684 h3 M1021 686.5 h3 M1026.5 684 h3 M1026.5 686.5 h3"/>
  <path d="M1059.5 680.5 h12 M1060.5 681 v6 h10 v-6 M1065.5 687 v5 M1062 692 h7 M1063 684 h5"/>
  <path d="M1263.5 680.5 h10 v11 h-10z M1263.5 684 h3 M1270.5 684 h3 M1263.5 688 h3 M1270.5 688 h3 M1266.5 680.5 v3 M1270.5 680.5 v3 M1266.5 688 v3.5 M1270.5 688 v3.5"/>
 </g>
 <path d="M1090.5 686.5 h8 M1207.7 686.5 h7.8 M1211.6 682.5 v8" stroke="#666" stroke-width="1"/>
 <rect x="1104.2" y="686" width="98.6" height="1.2" fill="#aaa"/>
 <rect x="1153" y="683.5" width="1" height="6" fill="#888"/>
 <rect x="1129.2" y="681" width="5.8" height="11.3" fill="#666"/>
 <text x="1227.5" y="691.5" font-size="11.5" fill="#444">59%</text>
</svg>


</body></html>
